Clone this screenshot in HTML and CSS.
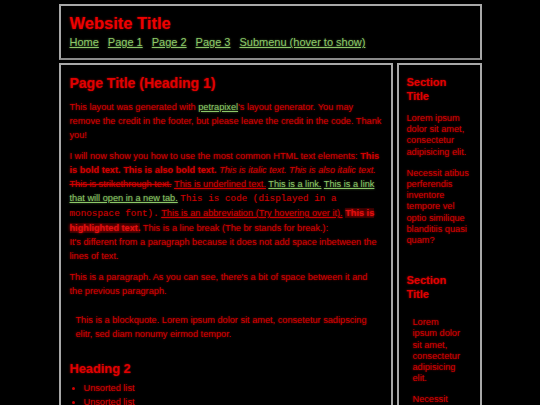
FILE: index.html
```html
<!DOCTYPE html>
<html lang="en">
<head>
<meta charset="utf-8">
<title>Website Title</title>
<link rel="stylesheet" href="styles.css">
</head>
<body>
<div class="container">
  <header class="header box">
    <div class="site-title">Website Title</div>
    <nav class="nav">
      <a href="#">Home</a>
      <a href="#">Page 1</a>
      <a href="#">Page 2</a>
      <a href="#">Page 3</a>
      <a href="#">Submenu (hover to show)</a>
    </nav>
  </header>
  <div class="columns">
    <main class="main box">
      <h1>Page Title (Heading 1)</h1>
      <p>This layout was generated with <a href="#">petrapixel</a>'s layout generator. You may remove the credit in the footer, but please leave the credit in the code. Thank you!</p>
      <p>I will now show you how to use the most common HTML text elements: <b>This is bold text.</b> <strong>This is also bold text.</strong> <i>This is italic text.</i> <em>This is also italic text.</em> <del>This is strikethrough text.</del> <u>This is underlined text.</u> <a href="#">This is a link.</a> <a href="#">This is a link that will open in a new tab.</a> <code>This is code (displayed in a monospace font).</code> <abbr title="abbr">This is an abbreviation (Try hovering over it).</abbr> <mark>This is highlighted text.</mark> This is a line break (The br stands for break.):<br>It's different from a paragraph because it does not add space inbetween the lines of text.</p>
      <p>This is a paragraph. As you can see, there's a bit of space between it and the previous paragraph.</p>
      <blockquote>This is a blockquote. Lorem ipsum dolor sit amet, consetetur sadipscing elitr, sed diam nonumy eirmod tempor.</blockquote>
      <h2>Heading 2</h2>
      <ul>
        <li>Unsorted list</li>
        <li>Unsorted list</li>
        <li>Unsorted list</li>
      </ul>
    </main>
    <aside class="sidebar box">
      <section class="side-section">
        <h2>Section Title</h2>
        <p>Lorem ipsum dolor sit amet, consectetur adipisicing elit.</p>
        <p>Necessit atibus perferendis inventore tempore vel optio similique blanditiis quasi quam?</p>
      </section>
      <section class="side-section">
        <h2>Section Title</h2>
        <div class="side-inner">
          <p>Lorem ipsum dolor sit amet, consectetur adipisicing elit.</p>
          <p>Necessit atibus perferendis inventore tempore vel optio similique blanditiis quasi quam?</p>
        </div>
      </section>
    </aside>
  </div>
</div>
</body>
</html>
```
FILE: styles.css
```css
html, body {
  margin: 0;
  padding: 0;
  background: #000;
}

body {
  font-family: "Liberation Sans", Arial, sans-serif;
  font-size: 9.2px;
  line-height: 14px;
  color: #d00000;
  text-shadow: 0 0 2px rgba(255, 0, 0, 0.6);
  overflow: hidden;
  height: 405px;
}

.container {
  width: 423px;
  margin: 4px auto 0;
}

.box {
  border: 2px solid #a8a8a8;
  border-bottom-color: #8a8a8a;
  background: #000;
}

.header {
  padding: 8px 9px 9px;
}

.site-title {
  font-size: 16.5px;
  line-height: 19px;
  font-weight: bold;
  color: #ee0000;
  text-shadow: 0 0 2px rgba(255, 0, 0, 0.6);
}

.nav {
  display: flex;
  gap: 9px;
  margin-top: 3px;
  font-size: 11px;
  line-height: 13px;
}

a {
  color: #8cc868;
  text-shadow: 0 0 2px rgba(140, 210, 100, 0.5);
  text-decoration: underline;
}

.columns {
  display: flex;
  gap: 4px;
  margin-top: 3px;
  align-items: flex-start;
}

.main {
  width: 312px;
  padding: 10px 9px;
  min-height: 400px;
}

.main h1 {
  font-size: 14px;
  line-height: 16px;
  margin: 0 0 9px;
  color: #e00000;
}

.main p {
  margin: 0 0 7px;
}

.main code {
  font-family: "Liberation Mono", "Courier New", monospace;
  font-size: 9.3px;
  color: #c80000;
  text-shadow: 0 0 1px rgba(255, 0, 0, 0.4);
}

.main abbr {
  text-decoration: underline;
}

.main mark {
  background: rgba(110, 0, 0, 0.45);
  color: #e01010;
  font-weight: bold;
  text-shadow: 0 0 3px #ff0000;
}

.main blockquote {
  margin: 15px 6px;
}

.main h2 {
  font-size: 12.8px;
  line-height: 15px;
  margin: 20px 0 5px;
  color: #e00000;
}

.main ul {
  margin: 0;
  padding-left: 14px;
}

.sidebar {
  flex: 1;
  padding: 11px 8px;
  line-height: 11.2px;
  min-height: 400px;
}

.side-section {
  margin-bottom: 28px;
}

.side-section h2 {
  font-size: 11px;
  line-height: 13.5px;
  margin: 0;
  color: #e00000;
}

.side-section p {
  margin: 10px 0;
}

.side-inner {
  padding: 6px 6px 0;
}
```
